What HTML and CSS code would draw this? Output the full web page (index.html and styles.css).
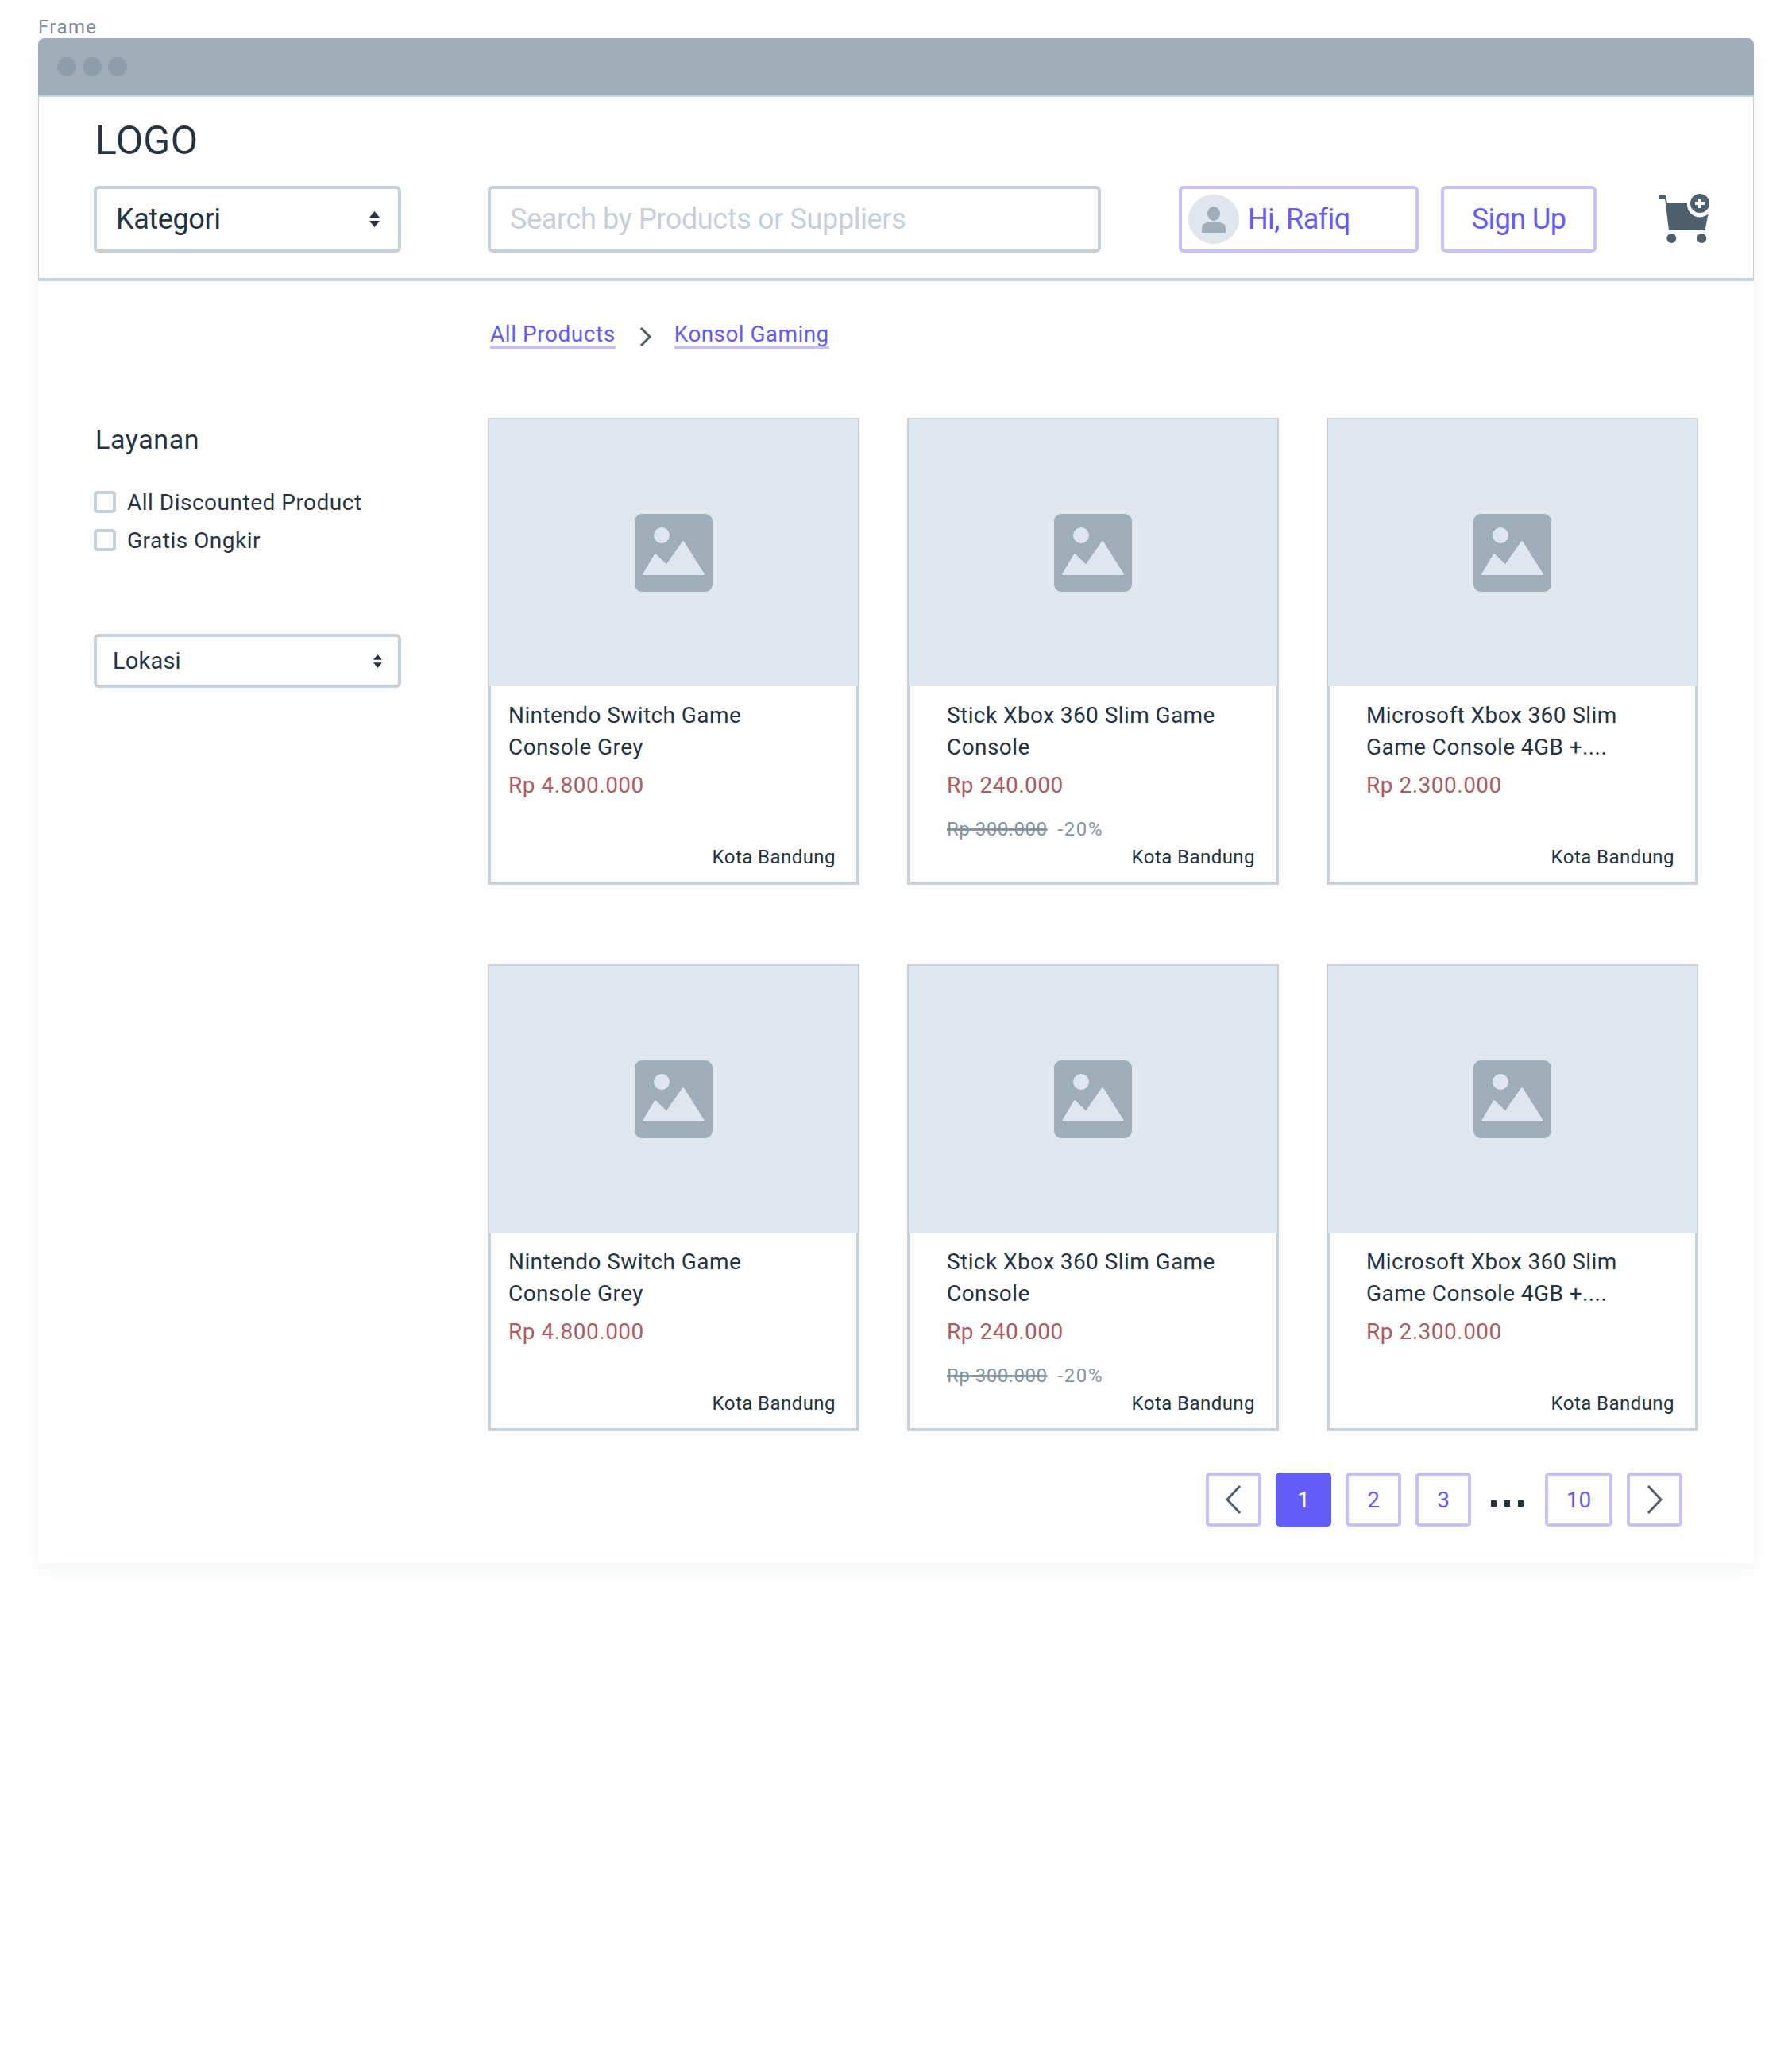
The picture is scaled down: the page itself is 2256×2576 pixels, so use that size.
FILE: index.html
```html
<!DOCTYPE html>
<html>
    <head>
        <title>Frame</title>
        <meta charset="UTF-8">
        <link rel="stylesheet" href="styles.css">
    </head>
    <body>
        <svg class="defs" width="0" height="0">
            <symbol id="pic" viewBox="0 0 98 98">
                <rect width="98" height="98" rx="9" fill="#9fadb9"></rect>
                <circle cx="34" cy="27" r="10" fill="#dfe6ee"></circle>
                <path d="M11 76 L26 51 L40 65 L61 35 L87 76 Z" fill="#dfe6ee" stroke="#dfe6ee" stroke-width="2" stroke-linejoin="round"></path>
            </symbol>
            <symbol id="arrows" viewBox="0 0 13 20">
                <path d="M6.5 0 L13 8 H0 Z M0 12 H13 L6.5 20 Z" fill="#243443"></path>
            </symbol>
        </svg>
        <div class="frame-label">Frame</div>
        <div class="window">
            <div class="titlebar">
                <span class="dot"></span><span class="dot"></span><span class="dot"></span>
            </div>
            <div class="header">
                <div class="logo">LOGO</div>
                <div class="header-row">
                    <div class="select select-big">
                        <span>Kategori</span>
                        <svg class="arrows-big"><use href="#arrows"></use></svg>
                    </div>
                    <div class="search">Search by Products or Suppliers</div>
                    <div class="btn btn-user">
                        <span class="avatar">
                            <svg width="32" height="34" viewBox="0 0 32 34">
                                <ellipse cx="16" cy="9" rx="8" ry="9" fill="#9fadb9"></ellipse>
                                <path d="M1 33 V27 Q1 21 9 20 H23 Q31 21 31 27 V33 Z" fill="#9fadb9"></path>
                            </svg>
                        </span>
                        Hi, Rafiq
                    </div>
                    <div class="btn btn-signup">Sign Up</div>
                    <svg class="cart" width="64" height="62" viewBox="0 0 64 62">
                        <path d="M0 2 H9 L11 12 H36 A16 16 0 0 0 62.5 25.5 L58.5 46 H13 L8 6 H0 Z" fill="#4e5f6e"></path>
                        <circle cx="16.3" cy="56" r="6" fill="#4e5f6e"></circle>
                        <circle cx="54.3" cy="56" r="6" fill="#4e5f6e"></circle>
                        <circle cx="52" cy="12" r="12" fill="#4e5f6e"></circle>
                        <path d="M50 6 H54 V10 H58 V14 H54 V18 H50 V14 H46 V10 H50 Z" fill="#fff"></path>
                    </svg>
                </div>
            </div>
            <div class="main">
                <div class="sidebar">
                    <div class="side-title">Layanan</div>
                    <label class="check"><span class="box"></span>All Discounted Product</label>
                    <label class="check"><span class="box"></span>Gratis Ongkir</label>
                    <div class="select select-small">
                        <span>Lokasi</span>
                        <svg class="arrows-small"><use href="#arrows"></use></svg>
                    </div>
                </div>
                <div class="content">
                    <div class="crumbs">
                        <a class="crumb">All Products</a>
                        <svg class="crumb-sep" width="16" height="24" viewBox="0 0 16 24"><path d="M2 1 L13 12 L2 23" fill="none" stroke="#4e5f6e" stroke-width="3"></path></svg>
                        <a class="crumb crumb-last">Konsol Gaming</a>
                    </div>
                    <div class="grid">
                        <div class="card card-first">
                            <div class="pic"><svg width="98" height="98"><use href="#pic"></use></svg></div>
                            <div class="body">
                                <div class="name">Nintendo Switch Game<br>Console Grey</div>
                                <div class="price">Rp 4.800.000</div>
                                <div class="place">Kota Bandung</div>
                            </div>
                        </div>
                        <div class="card">
                            <div class="pic"><svg width="98" height="98"><use href="#pic"></use></svg></div>
                            <div class="body">
                                <div class="name">Stick Xbox 360 Slim Game<br>Console</div>
                                <div class="price">Rp 240.000</div>
                                <div class="old"><s>Rp 300.000</s><span>-20%</span></div>
                                <div class="place">Kota Bandung</div>
                            </div>
                        </div>
                        <div class="card">
                            <div class="pic"><svg width="98" height="98"><use href="#pic"></use></svg></div>
                            <div class="body">
                                <div class="name">Microsoft Xbox 360 Slim<br>Game Console 4GB +....</div>
                                <div class="price">Rp 2.300.000</div>
                                <div class="place">Kota Bandung</div>
                            </div>
                        </div>
                        <div class="card card-first">
                            <div class="pic"><svg width="98" height="98"><use href="#pic"></use></svg></div>
                            <div class="body">
                                <div class="name">Nintendo Switch Game<br>Console Grey</div>
                                <div class="price">Rp 4.800.000</div>
                                <div class="place">Kota Bandung</div>
                            </div>
                        </div>
                        <div class="card">
                            <div class="pic"><svg width="98" height="98"><use href="#pic"></use></svg></div>
                            <div class="body">
                                <div class="name">Stick Xbox 360 Slim Game<br>Console</div>
                                <div class="price">Rp 240.000</div>
                                <div class="old"><s>Rp 300.000</s><span>-20%</span></div>
                                <div class="place">Kota Bandung</div>
                            </div>
                        </div>
                        <div class="card">
                            <div class="pic"><svg width="98" height="98"><use href="#pic"></use></svg></div>
                            <div class="body">
                                <div class="name">Microsoft Xbox 360 Slim<br>Game Console 4GB +....</div>
                                <div class="price">Rp 2.300.000</div>
                                <div class="place">Kota Bandung</div>
                            </div>
                        </div>
                    </div>
                    <div class="pager">
                        <div class="page"><svg width="20" height="36" viewBox="0 0 20 36"><path d="M18 1 L2 18 L18 35" fill="none" stroke="#4e5f6e" stroke-width="3"></path></svg></div>
                        <div class="page current">1</div>
                        <div class="page">2</div>
                        <div class="page">3</div>
                        <div class="more"><i></i><i></i><i></i></div>
                        <div class="page page-wide">10</div>
                        <div class="page"><svg width="20" height="36" viewBox="0 0 20 36"><path d="M2 1 L18 18 L2 35" fill="none" stroke="#4e5f6e" stroke-width="3"></path></svg></div>
                    </div>
                </div>
            </div>
        </div>
    </body>
</html>
```

FILE: styles.css
```css
*{
    box-sizing: border-box;
}
body{
    margin: 0;
    height: 2576px;
    background: #fff;
    font-family: "Roboto", "Liberation Sans", sans-serif;
    color: #243443;
}
.defs{
    position: absolute;
}
.frame-label{
    height: 48px;
    padding: 20px 0 0 48px;
    font-size: 24px;
    line-height: 28px;
    letter-spacing: 1.4px;
    color: #7c8e9d;
}
.window{
    width: 2160px;
    height: 1920px;
    margin-left: 48px;
    background: #fff;
    border-radius: 8px 8px 0 0;
    box-shadow: 0 8px 24px rgba(40, 60, 80, 0.06);
}
.titlebar{
    display: flex;
    align-items: center;
    gap: 8px;
    height: 74px;
    padding-left: 24px;
    background: #9fadb9;
    border-bottom: 2px solid #c4d0db;
    border-radius: 8px 8px 0 0;
}
.dot{
    width: 24px;
    height: 24px;
    border-radius: 50%;
    background: #8d9dab;
}
.header{
    height: 232px;
    padding: 23px 0 0 69px;
    border-left: 1px solid #c4d0db;
    border-right: 1px solid #c4d0db;
    border-bottom: 4px solid #c4d0db;
}
.logo{
    height: 64px;
    margin-left: 2px;
    margin-bottom: 25px;
    font-size: 50px;
    line-height: 64px;
    letter-spacing: 0.3px;
}
.header-row{
    display: flex;
    align-items: center;
    height: 84px;
    font-size: 36px;
}
.select{
    display: flex;
    align-items: center;
    justify-content: space-between;
    width: 387px;
    background: #fff;
    border: 4px solid #c4d0db;
    border-radius: 6px;
}
.select-big{
    height: 84px;
    padding: 0 23px 0 24px;
    letter-spacing: -0.4px;
}
.select-small{
    height: 68px;
    margin-top: 94px;
    padding: 0 20px 0 20px;
    font-size: 29px;
    letter-spacing: 0.2px;
}
.arrows-big{
    width: 13px;
    height: 22px;
}
.arrows-small{
    width: 11px;
    height: 19px;
}
.search{
    display: flex;
    align-items: center;
    width: 772px;
    height: 84px;
    margin-left: 109px;
    padding-left: 24px;
    border: 4px solid #c4d0db;
    border-radius: 6px;
    color: #c4d0db;
    letter-spacing: -0.36px;
}
.btn{
    display: flex;
    align-items: center;
    height: 84px;
    border: 4px solid #c7c1fb;
    border-radius: 6px;
    color: #645cf6;
    letter-spacing: -0.6px;
}
.btn-user{
    width: 302px;
    margin-left: 98px;
    padding-left: 8px;
}
.avatar{
    display: flex;
    align-items: flex-end;
    justify-content: center;
    width: 64px;
    height: 62px;
    margin-right: 11px;
    padding-bottom: 13px;
    border-radius: 50%;
    background: #dfe6ee;
}
.btn-signup{
    justify-content: center;
    width: 196px;
    margin-left: 28px;
}
.cart{
    margin-left: 78px;
    margin-bottom: 2px;
}
.main{
    display: flex;
}
.sidebar{
    display: flex;
    flex-direction: column;
    align-items: flex-start;
    width: 566px;
    padding: 176px 0 0 70px;
}
.side-title{
    height: 46px;
    margin-bottom: 32px;
    margin-left: 2px;
    font-size: 34px;
    line-height: 46px;
    letter-spacing: 0.6px;
}
.check{
    display: flex;
    align-items: center;
    height: 48px;
    font-size: 28px;
    letter-spacing: 0.5px;
}
.box{
    width: 28px;
    height: 28px;
    margin-right: 14px;
    border: 4px solid #c4d0db;
    border-radius: 5px;
}
.content{
    width: 1524px;
}
.crumbs{
    display: flex;
    align-items: flex-end;
    height: 172px;
    padding: 0 0 86px 3px;
    font-size: 28px;
}
.crumb{
    line-height: 30px;
    border-bottom: 4px solid #c7c1fb;
    color: #645cf6;
    letter-spacing: 0.55px;
}
.crumb-last{
    letter-spacing: 0.4px;
}
.crumb-sep{
    margin: 0 28px 4px 30px;
}
.grid{
    display: grid;
    grid-template-columns: repeat(3, 468px);
    grid-auto-rows: 588px;
    gap: 100px 60px;
}
.card{
    display: flex;
    flex-direction: column;
    border: 4px solid #c4d0db;
    border-top: none;
}
.pic{
    display: flex;
    align-items: center;
    justify-content: center;
    height: 338px;
    margin: 0 -4px;
    background: #dfe6ee;
    border: 2px solid #c4d0db;
    border-bottom: none;
}
.body{
    position: relative;
    flex: 1;
    padding: 17px 0 0 46px;
    font-size: 28px;
}
.card-first .body{
    padding-left: 22px;
}
.name{
    line-height: 40px;
    letter-spacing: 0.42px;
}
.price{
    margin-top: 8px;
    line-height: 40px;
    color: #ae5a5e;
    letter-spacing: 0.5px;
}
.old{
    margin-top: 19px;
    font-size: 24px;
    line-height: 32px;
    color: #8295a5;
}
.old s{
    margin-right: 13px;
    letter-spacing: 0.5px;
    text-decoration-thickness: 3px;
}
.old span{
    letter-spacing: 1.6px;
}
.place{
    position: absolute;
    right: 26px;
    bottom: 13px;
    font-size: 24px;
    line-height: 36px;
    letter-spacing: 0.45px;
}
.pager{
    display: flex;
    align-items: center;
    gap: 18px;
    height: 68px;
    margin-top: 52px;
    padding-left: 904px;
    font-size: 28px;
}
.page{
    display: flex;
    align-items: center;
    justify-content: center;
    width: 70px;
    height: 68px;
    border: 4px solid #c7c1fb;
    border-radius: 5px;
    color: #645cf6;
}
.page-wide{
    width: 85px;
}
.current{
    background: #645cf6;
    border-color: #645cf6;
    color: #fff;
}
.more{
    display: flex;
    gap: 10px;
    width: 57px;
    padding: 10px 0 0 7px;
}
.more i{
    width: 7px;
    height: 8px;
    background: #243443;
}
```
